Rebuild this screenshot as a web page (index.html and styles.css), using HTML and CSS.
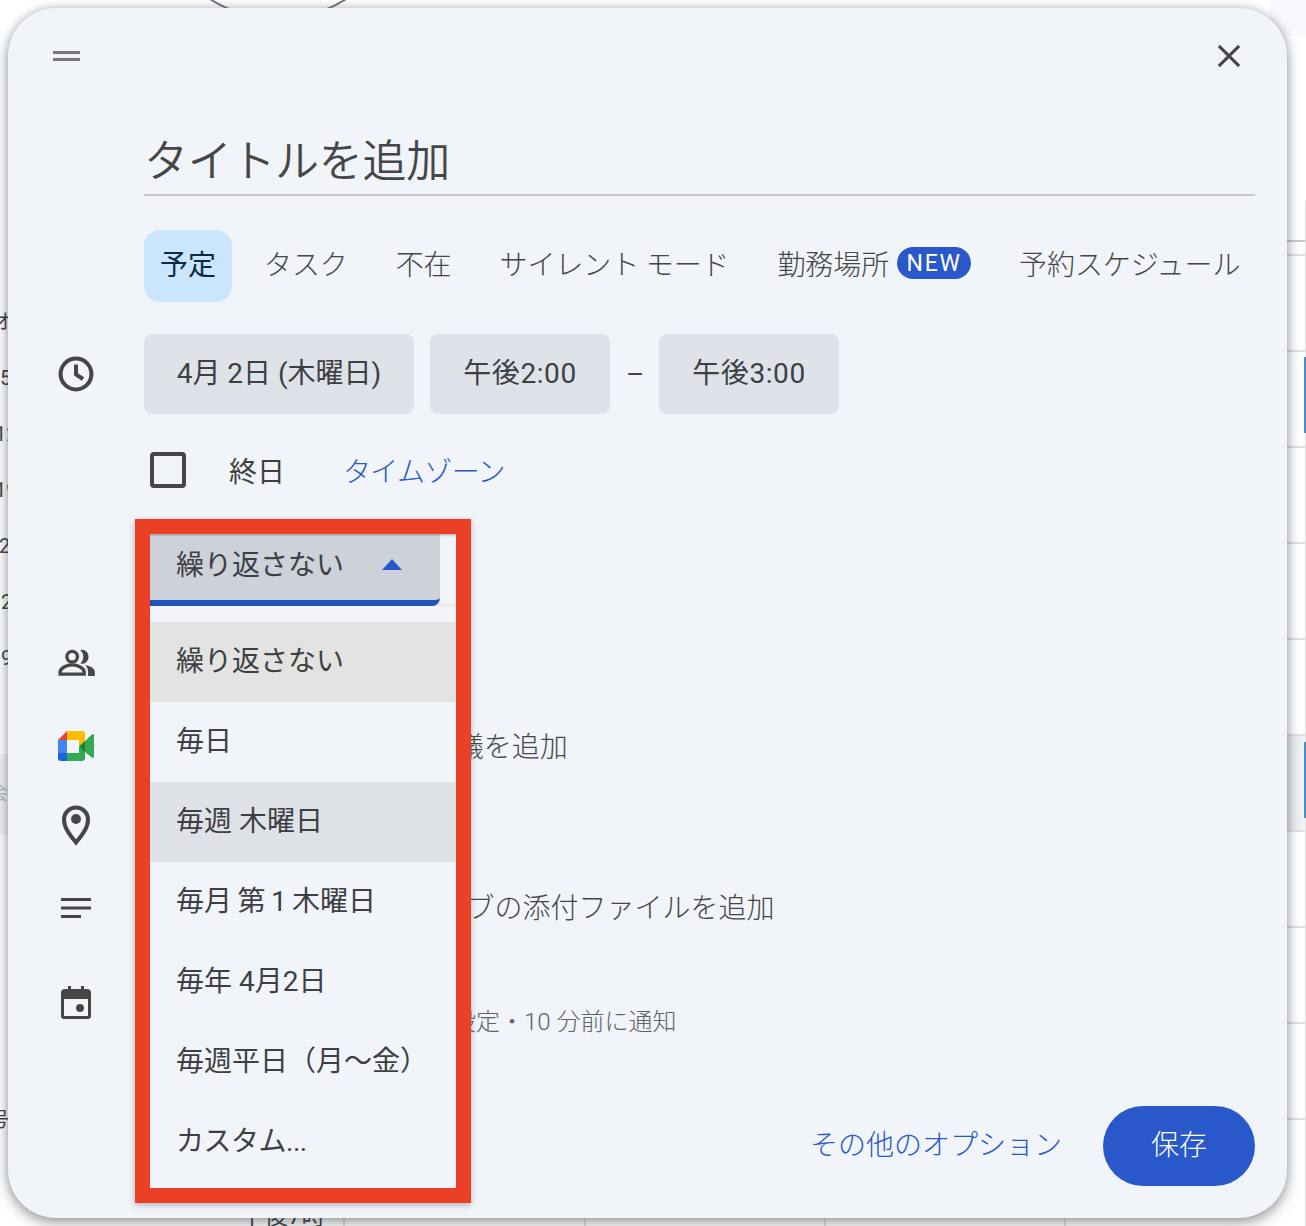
FILE: index.html
```html
<!DOCTYPE html>
<html lang="ja">
<head>
<meta charset="utf-8">
<title>予定の作成</title>
<link rel="stylesheet" href="styles.css">
</head>
<body>
<div class="backdrop" aria-hidden="true">
  <span class="bg-circle"></span>
  <span class="bg-top-right"></span>
  <span class="bg-tint-r"></span>
  <span class="bg-line r1"></span><span class="bg-line r2"></span><span class="bg-line r3"></span><span class="bg-line r4"></span><span class="bg-line r5"></span><span class="bg-line r6"></span><span class="bg-line r7"></span><span class="bg-line r8"></span><span class="bg-line r9"></span><span class="bg-line r10"></span><span class="bg-line r11"></span>
  <span class="bg-right"></span><span class="bg-blue b1"></span><span class="bg-blue b2"></span>
  <span class="bg-v v1"></span><span class="bg-v v2"></span><span class="bg-v v3"></span><span class="bg-v v4"></span>
  <span class="bg-grey"></span>
  <span class="bg-t t1">オ</span><span class="bg-t t2">5</span><span class="bg-t t3">12</span><span class="bg-t t4">19</span><span class="bg-t t5">26</span><span class="bg-t t6">2</span><span class="bg-t t7">9</span><span class="bg-t t8">号</span><span class="bg-t t10">会</span>
  <span class="bg-t t9">午後7時</span>
</div>

<main class="dialog">
  <header class="top">
    <span class="handle"></span>
    <svg class="close" viewBox="0 0 24 24"><path d="M1 1 23 23M23 1 1 23"/></svg>
  </header>

  <div class="title">タイトルを追加</div>

  <nav class="tabs">
    <span class="tab active">予定</span>
    <span class="tab">タスク</span>
    <span class="tab">不在</span>
    <span class="tab">サイレント モード</span>
    <span class="tab">勤務場所<b class="new">NEW</b></span>
    <span class="tab">予約スケジュール</span>
  </nav>

  <div class="row when">
    <svg class="icon" viewBox="0 0 36 36"><circle cx="18" cy="18" r="15.4" class="line"/><path class="line" d="M18 8.500V18.500L25 23"/></svg>
    <div class="chips">
      <span class="chip date">4月 2日 (木曜日)</span>
      <span class="chip time">午後2:00</span>
      <span class="dash">–</span>
      <span class="chip time">午後3:00</span>
    </div>
  </div>

  <div class="row allday">
    <span class="check"></span>
    <span class="allday-label">終日</span>
    <a class="link tz">タイムゾーン</a>
  </div>

  <div class="row guests">
    <svg class="icon" viewBox="0 0 38 28"><circle cx="14.500" cy="8" r="5.500" class="line thin"/><path class="line thin" d="M2 26v-2c0-4.500 7-7.500 12.500-7.500S27 19.500 27 24v2z"/><path class="fill" d="M23 1c4-1.500 8.500 2 8.500 7s-4.500 8.500-8.500 7c1.800-2 3-4.300 3-7s-1.200-5-3-7zM28 16.500c5.500 1 10 3.500 10 7.500v4h-7v-4c0-3-1-5.500-3-7.500z"/></svg>
  </div>

  <div class="row meet">
    <svg class="icon" viewBox="0 0 36 30"><path fill="#fbbc04" d="M9 0h15a3 3 0 0 1 3 3v8l-6 4.500V9H9z"/><path fill="#ea4335" d="M9 0v9H0z"/><path fill="#4285f4" d="M0 9h9v13H0z"/><path fill="#1967d2" d="M0 22h9v8H3a3 3 0 0 1-3-3z"/><path fill="#34a853" d="M9 22h12v-6.500l6 4.500v7a3 3 0 0 1-3 3H9z"/><path fill="#188038" d="M21 15.500 27 10v11z"/><path fill="#34a853" d="M27 10 34 3.500c1-.8 2-.3 2 1v21c0 1.300-1 1.800-2 1L27 21z"/></svg>
    <span class="row-text meet-text">Google Meet のビデオ会議を追加</span>
  </div>

  <div class="row place">
    <svg class="icon" viewBox="0 0 30 42"><path class="line" d="M15 38.500C8 30 3 23.500 3 15.500a12 12 0 0 1 24 0c0 8-5 14.500-12 23z"/><circle cx="15" cy="15" r="5" class="fill"/></svg>
  </div>

  <div class="row desc">
    <svg class="icon" viewBox="0 0 30 20"><path class="fill" d="M0 0h30v3H0zM0 8.500h30v3H0zM0 17h20v3H0z"/></svg>
    <span class="row-text desc-text">説明または Google ドライブの添付ファイルを追加</span>
  </div>

  <div class="row cal">
    <svg class="icon" viewBox="0 0 30 34"><path class="fill" fill-rule="evenodd" d="M4 3h3V0h3v3h10V0h3v3h3a4 4 0 0 1 4 4v23a3 3 0 0 1-3 3H3a3 3 0 0 1-3-3V7a4 4 0 0 1 4-4zM3 13v17h24V13z"/><circle cx="19" cy="22" r="4" class="fill"/></svg>
    <span class="cal-sub">予定あり・デフォルトの公開設定・10 分前に通知</span>
  </div>

  <footer class="actions">
    <a class="link more">その他のオプション</a>
    <span class="save">保存</span>
  </footer>

  <section class="repeat">
    <div class="repeat-btn">
      <span>繰り返さない</span>
      <i class="caret"></i>
    </div>
    <ul class="menu">
      <li class="opt picked">繰り返さない</li>
      <li class="opt">毎日</li>
      <li class="opt hover">毎週 木曜日</li>
      <li class="opt tight">毎月 第 1 木曜日</li>
      <li class="opt">毎年 4月2日</li>
      <li class="opt">毎週平日（月～金）</li>
      <li class="opt kana">カスタム...</li>
    </ul>
  </section>
</main>
</body>
</html>
```

FILE: styles.css
```css
* { box-sizing: border-box; }
html, body { margin: 0; padding: 0; }
body {
  position: relative;
  width: 1306px;
  height: 1226px;
  overflow: hidden;
  background: #fff;
  font-family: Roboto, "Noto Sans CJK JP", "Noto Sans", sans-serif;
  font-size: 28px;
  color: #3c4043;
}

/* calendar peeking out behind the dialog */
.backdrop { position: absolute; inset: 0; background: #fff; }
.bg-top-right { position: absolute; left: 1270px; top: 0; width: 36px; height: 36px; background: #f8f9fc; }
.bg-tint-r { position: absolute; left: 1287px; top: 735px; width: 19px; height: 96px; background: linear-gradient(90deg, #e6e6e7, #f6f6f6); }
.bg-circle { position: absolute; left: 151px; top: -234px; width: 254px; height: 254px; border: 2px solid #70757a; border-radius: 50%; }
.bg-line { position: absolute; left: 1270px; width: 36px; height: 2px; background: #dde1e8; }
.r1 { top: 240px; background: #c8cacc; } .r2 { top: 254px; } .r3 { top: 350px; } .r4 { top: 446px; } .r5 { top: 542px; }
.r6 { top: 638px; } .r7 { top: 734px; } .r8 { top: 830px; } .r9 { top: 926px; } .r10 { top: 1022px; } .r11 { top: 1118px; }
.bg-right { position: absolute; left: 1305px; top: 200px; width: 1px; height: 1026px; background: #dde1e8; }
.bg-blue { position: absolute; left: 1304px; width: 2px; background: #3f8fd2; }
.b1 { top: 357px; height: 76px; }
.b2 { top: 742px; height: 76px; }
.bg-v { position: absolute; top: 1210px; width: 2px; height: 16px; background: #dde1e8; }
.v1 { left: 343px; } .v2 { left: 584px; } .v3 { left: 824px; } .v4 { left: 1064px; }
.bg-t { position: absolute; font-size: 20px; line-height: 24px; color: #3c4043; }
.t1 { left: -7px; top: 310px; }
.t2 { left: 0; top: 366px; }
.t3 { left: -5px; top: 422px; }
.t4 { left: -5px; top: 478px; }
.t5 { left: -1px; top: 534px; }
.t6 { left: 1px; top: 590px; }
.t7 { left: 1px; top: 646px; }
.t8 { left: -11px; top: 1108px; }
.t9 { left: 240px; top: 1201px; font-size: 24px; line-height: 30px; }
.t10 { left: -12px; top: 781px; color: #b9bcbf; }
.bg-grey { position: absolute; left: 0; top: 754px; width: 8px; height: 80px; background: #f1f3f4; }

/* dialog */
.dialog {
  position: relative;
  width: 1279px;
  height: 1210px;
  margin: 8px 0 0 8px;
  padding: 0 32px 0 136px;
  display: flex;
  flex-direction: column;
  background: #f1f4f9;
  border-radius: 48px;
  box-shadow: 0 6px 14px rgba(60, 64, 67, .38), 0 0 10px rgba(60, 64, 67, .3);
}
.top { position: relative; height: 110px; flex: none; }
.handle {
  position: absolute; left: -91px; top: 43px; width: 27px; height: 10px;
  border-top: 3.500px solid #787b7a; border-bottom: 3.500px solid #787b7a;
}
.close { position: absolute; left: 1074px; top: 37px; width: 22px; height: 22px; stroke: #444746; stroke-width: 3.300px; fill: none; }
.title {
  height: 78px; flex: none;
  font-size: 44px; line-height: 88px; letter-spacing: -.3px;
  color: #444746;
  border-bottom: 2px solid #c8c9c6;
  font-weight: 350;
}

.tabs { display: flex; gap: 16px; margin-top: 34px; height: 72px; flex: none; }
.tab { display: flex; align-items: center; padding: 0 16px 6px; color: #444746; border-radius: 16px; white-space: nowrap; font-weight: 300; letter-spacing: -.1px; }
.tab.active { background: #c9e6fd; color: #0b2a48; font-weight: 400; letter-spacing: 0; }
.new {
  display: inline-block; margin-left: 8px; width: 74px; height: 32px; line-height: 34px;
  background: #2858c9; color: #fff; border-radius: 16px; font-size: 23px; font-weight: 400; letter-spacing: 1.800px; text-align: center;
}

.row { position: relative; display: flex; align-items: center; flex: none; }
.icon { position: absolute; left: -86px; width: 36px; height: 36px; }
.line { fill: none; stroke: #444746; stroke-width: 4px; }
.line.thin { stroke-width: 3.500px; }
.fill { fill: #444746; }

.when { margin-top: 32px; height: 80px; }
.chips { display: flex; align-items: center; gap: 16px; }
.chip { display: flex; align-items: center; justify-content: center; height: 80px; background: #dfe3e9; border-radius: 8px; padding-bottom: 6px; white-space: nowrap; }
.chip.date { width: 270px; }
.chip.time { width: 180px; letter-spacing: .6px; }
.dash { width: 17px; text-align: center; color: #444746; }

.allday { margin-top: 38px; height: 36px; }
.check { width: 36px; height: 36px; margin-left: 6px; border: 4px solid #444746; border-radius: 4px; flex: none; }
.allday-label { margin-left: 43px; padding-bottom: 1px; }
.link { color: #2858c9; font-weight: 300; }
.tz { margin-left: 58px; letter-spacing: -.7px; padding-bottom: 1px; }

.guests { margin-top: 156px; height: 36px; }
.guests .icon { left: -86px; width: 37px; height: 27px; }
.meet { margin-top: 49px; height: 36px; }
.meet .icon { left: -86px; width: 36px; height: 30px; margin-top: -2px; }
.row-text { color: #444746; font-weight: 300; padding-bottom: 4px; white-space: nowrap; }
.meet-text { margin-left: 9px; }
.desc-text { margin-left: -2px; }
.place { margin-top: 44px; height: 36px; }
.place .icon { left: -83px; width: 30px; height: 42px; margin-top: -4px; }
.desc { margin-top: 45px; height: 36px; }
.desc .icon { left: -83px; width: 30px; height: 20px; }
.cal { margin-top: 60px; height: 60px; }
.cal .icon { left: -83px; width: 30px; height: 34px; top: 0; }
.cal-sub { position: absolute; left: -4px; top: 21px; font-size: 24px; line-height: 30px; color: #5f6368; font-weight: 300; white-space: nowrap; }

.actions { position: absolute; right: 32px; top: 1098px; display: flex; align-items: center; height: 80px; }
.more { margin-right: 41px; padding-bottom: 6px; }
.save { display: flex; align-items: center; justify-content: center; width: 152px; height: 80px; padding-bottom: 6px; background: #2858c9; color: #fff; border-radius: 40px; font-weight: 300; }

/* open repeat dropdown, outlined in red */
.repeat {
  position: absolute; left: 127px; top: 511px; width: 336px; height: 684px;
  border: 15px solid #ea4025;
  background: #f1f4f9;
  box-shadow: 0 2px 6px rgba(60, 64, 67, .35);
}
.repeat::before {
  content: ""; position: absolute; left: 0; right: 0; top: 0; height: 3px;
  background: linear-gradient(rgba(60, 64, 67, .3), rgba(60, 64, 67, 0));
}
.repeat-btn {
  display: flex; align-items: center; justify-content: space-between;
  width: 290px; height: 72px; padding: 0 38px 8px 26px;
  background: #cdd1da;
  border-bottom: 6px solid #2452bd;
  border-bottom-right-radius: 8px;
  white-space: nowrap;
}
.caret { width: 0; height: 0; border-left: 10px solid transparent; border-right: 10px solid transparent; border-bottom: 11px solid #2858c9; margin-top: 2px; }
.menu { position: relative; list-style: none; margin: 0; padding: 16px 0 0; box-shadow: 0 -1px 2px rgba(60, 64, 67, .12); }
.opt { height: 80px; line-height: 80px; padding-left: 26px; white-space: nowrap; }
.picked { background: #e3e3e1; }
.hover { background: #dfe2e7; }
.tight { word-spacing: -1.500px; }
.kana { letter-spacing: -.5px; }
```
